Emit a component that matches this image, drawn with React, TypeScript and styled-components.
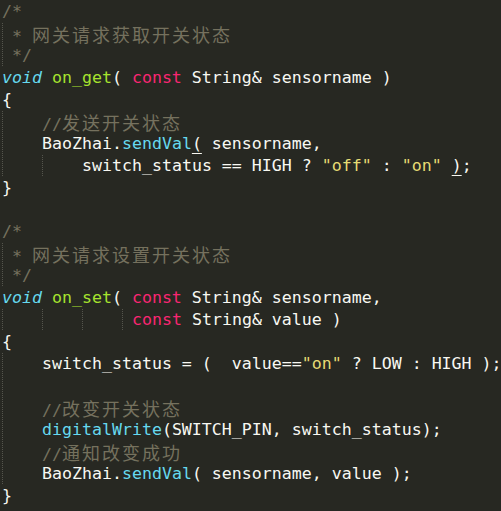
import React from "react";
import styled, { createGlobalStyle } from "styled-components";

const Global = createGlobalStyle`
  html, body { margin: 0; padding: 0; background: #272822; }
`;

type Kind = "txt" | "cmt" | "type" | "fn" | "kw" | "str" | "sup" | "match";
type Tok = [Kind, string];
type LineData = { indent?: number; toks: Tok[] };

const COLORS: Record<Kind, string> = {
  txt: "#F8F8F2",
  cmt: "#75715E",
  type: "#66D9EF",
  fn: "#A6E22E",
  kw: "#F92672",
  str: "#E6DB74",
  sup: "#66D9EF",
  match: "#F8F8F2",
};

const Editor = styled.div`
  width: 501px;
  height: 511px;
  box-sizing: border-box;
  padding-left: 2px;
  padding-top: 1px;
  background: #272822;
  overflow: hidden;
  font-family: "DejaVu Sans Mono", "Liberation Mono", monospace;
  font-size: 16.6px;
  color: #f8f8f2;
`;

const Line = styled.div`
  height: 22px;
  line-height: 22px;
  white-space: pre;
`;

const Guide = styled.span<{ $cols: number }>`
  display: inline-block;
  vertical-align: top;
  width: ${(p) => p.$cols * 10}px;
  height: 22px;
  background-image: repeating-linear-gradient(
    to bottom,
    #55554d 0 1px,
    transparent 1px 2px
  );
  background-size: 1px 100%;
  background-repeat: no-repeat;
  background-position: 0 0;
`;

const Tk = styled.span<{ $kind: Kind }>`
  color: ${(p) => COLORS[p.$kind]};
  font-style: ${(p) => (p.$kind === "type" ? "italic" : "normal")};
  text-decoration: ${(p) => (p.$kind === "match" ? "underline" : "none")};
  text-underline-offset: 4px;
  text-decoration-thickness: 1px;
`;

const Cjk = styled.span`
  font-family: "Noto Sans CJK SC", sans-serif;
  font-size: 18px;
  letter-spacing: 2px;
`;

const lines: LineData[] = [
  { toks: [["cmt", "/*"]] },
  { indent: 1, toks: [["cmt", "* 网关请求获取开关状态"]] },
  { indent: 1, toks: [["cmt", "*/"]] },
  {
    toks: [
      ["type", "void"],
      ["txt", " "],
      ["fn", "on_get"],
      ["txt", "( "],
      ["kw", "const"],
      ["txt", " String& sensorname )"],
    ],
  },
  { toks: [["txt", "{"]] },
  { indent: 4, toks: [["cmt", "//发送开关状态"]] },
  {
    indent: 4,
    toks: [
      ["txt", "BaoZhai."],
      ["sup", "sendVal"],
      ["match", "("],
      ["txt", " sensorname,"],
    ],
  },
  {
    indent: 8,
    toks: [
      ["txt", "switch_status == HIGH ? "],
      ["str", '"off"'],
      ["txt", " : "],
      ["str", '"on"'],
      ["txt", " "],
      ["match", ")"],
      ["txt", ";"],
    ],
  },
  { toks: [["txt", "}"]] },
  { toks: [] },
  { toks: [["cmt", "/*"]] },
  { indent: 1, toks: [["cmt", "* 网关请求设置开关状态"]] },
  { indent: 1, toks: [["cmt", "*/"]] },
  {
    toks: [
      ["type", "void"],
      ["txt", " "],
      ["fn", "on_set"],
      ["txt", "( "],
      ["kw", "const"],
      ["txt", " String& sensorname,"],
    ],
  },
  {
    indent: 13,
    toks: [
      ["kw", "const"],
      ["txt", " String& value )"],
    ],
  },
  { toks: [["txt", "{"]] },
  {
    indent: 4,
    toks: [
      ["txt", "switch_status = (  value=="],
      ["str", '"on"'],
      ["txt", " ? LOW : HIGH );"],
    ],
  },
  { indent: 4, toks: [] },
  { indent: 4, toks: [["cmt", "//改变开关状态"]] },
  {
    indent: 4,
    toks: [
      ["sup", "digitalWrite"],
      ["txt", "(SWITCH_PIN, switch_status);"],
    ],
  },
  { indent: 4, toks: [["cmt", "//通知改变成功"]] },
  {
    indent: 4,
    toks: [
      ["txt", "BaoZhai."],
      ["sup", "sendVal"],
      ["txt", "( sensorname, value );"],
    ],
  },
  { toks: [["txt", "}"]] },
];

function renderText(text: string) {
  const parts = text.split(/([\u4e00-\u9fff]+)/);
  return parts.map((p, i) =>
    /[\u4e00-\u9fff]/.test(p) ? <Cjk key={i}>{p}</Cjk> : <React.Fragment key={i}>{p}</React.Fragment>
  );
}

function Guides({ n }: { n: number }) {
  const out: React.ReactNode[] = [];
  for (let c = 0; c < n; c += 4) {
    out.push(<Guide key={c} $cols={Math.min(4, n - c)} />);
  }
  return <>{out}</>;
}

export default function App() {
  return (
    <>
      <Global />
      <Editor>
        {lines.map((l, i) => (
          <Line key={i}>
            <Guides n={l.indent ?? 0} />
            {l.toks.map(([k, t], j) => (
              <Tk key={j} $kind={k}>
                {renderText(t)}
              </Tk>
            ))}
          </Line>
        ))}
      </Editor>
    </>
  );
}
